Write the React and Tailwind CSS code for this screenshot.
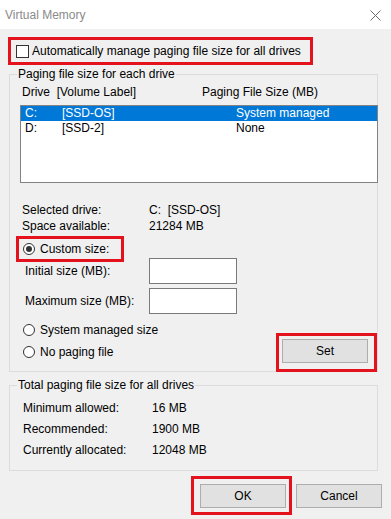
const font = { fontFamily: '"Liberation Sans", Arial, sans-serif' }

function Radio({ checked }) {
  return (
    <span className="flex h-[12px] w-[12px] shrink-0 items-center justify-center rounded-full border border-[#333] bg-white">
      {checked ? <span className="h-[6px] w-[6px] rounded-full bg-[#333]" /> : null}
    </span>
  )
}

function Button({ children }) {
  return (
    <div className="flex h-[24px] w-[86px] items-center justify-center border border-[#adadad] bg-[#e1e1e1] text-[12px] text-black">
      {children}
    </div>
  )
}

export default function App() {
  return (
    <div className="h-[519px] w-[391px] overflow-hidden bg-[#f0f0f0] text-[12px] text-black" style={font}>
      <div className="flex h-[29px] items-center justify-between bg-white pl-[5px] pr-[10px]">
        <span className="text-[#8a8a8a]">Virtual Memory</span>
        <svg width="11" height="11" viewBox="0 0 11 11" className="mt-[1px]">
          <path d="M0.5 0.5 L10.5 10.5 M10.5 0.5 L0.5 10.5" stroke="#6a6a6a" strokeWidth="1" />
        </svg>
      </div>

      <div className="ml-[8px] mt-[8px] flex h-[28px] w-[305px] items-center gap-[3px] border-[3px] border-[#e3121c] pl-[5px]">
        <span className="h-[13px] w-[13px] border border-[#333] bg-white" />
        <span>Automatically manage paging file size for all drives</span>
      </div>

      <div className="relative ml-[9px] mt-[9px] h-[298px] w-[369px] border border-[#dcdcdc]">
        <span className="absolute left-[7px] top-[-9px] bg-[#f0f0f0] px-[1px] leading-[16px]">
          Paging file size for each drive
        </span>
        <div className="flex pl-[12px] pt-[10px] leading-[15px]">
          <span className="w-[180px] whitespace-pre">Drive  [Volume Label]</span>
          <span>Paging File Size (MB)</span>
        </div>
        <div className="ml-[10px] mt-[5px] h-[78px] w-[358px] border border-[#828282] bg-white leading-[15px]">
          <div className="flex bg-[#0078d7] pl-[4px] text-white">
            <span className="w-[37px]">C:</span>
            <span className="w-[174px]">[SSD-OS]</span>
            <span>System managed</span>
          </div>
          <div className="flex pl-[4px]">
            <span className="w-[37px]">D:</span>
            <span className="w-[174px]">[SSD-2]</span>
            <span>None</span>
          </div>
        </div>
        <div className="mt-[19px] pl-[12px] leading-[16px]">
          <div className="flex">
            <span className="w-[127px]">Selected drive:</span>
            <span className="whitespace-pre">C:  [SSD-OS]</span>
          </div>
          <div className="flex">
            <span className="w-[127px]">Space available:</span>
            <span>21284 MB</span>
          </div>
        </div>
        <div className="ml-[6px] mt-[2px] flex h-[26px] w-[108px] items-center gap-[5px] border-[3px] border-[#e3121c] pl-[4px]">
          <Radio checked />
          <span>Custom size:</span>
        </div>
        <div className="mt-[-4px] flex items-center pl-[15px]">
          <span className="w-[124px]">Initial size (MB):</span>
          <span className="h-[26px] w-[88px] border border-[#7a7a7a] bg-white" />
        </div>
        <div className="mt-[4px] flex items-center pl-[15px]">
          <span className="w-[124px]">Maximum size (MB):</span>
          <span className="h-[26px] w-[88px] border border-[#7a7a7a] bg-white" />
        </div>
        <div className="mt-[8px] flex items-start justify-between">
          <div className="flex flex-col gap-[6px] pl-[13px] leading-[16px]">
            <div className="flex items-center gap-[5px]">
              <Radio />
              <span>System managed size</span>
            </div>
            <div className="flex items-center gap-[5px]">
              <Radio />
              <span>No paging file</span>
            </div>
          </div>
          <div className="relative z-10 mt-[11px] h-[39px] w-[101px] border-[3px] border-[#e3121c] pl-[3px] pt-[3px]">
            <Button>Set</Button>
          </div>
        </div>
      </div>

      <div className="relative ml-[9px] mt-[13px] h-[86px] w-[369px] border border-[#dcdcdc]">
        <span className="absolute left-[7px] top-[-9px] bg-[#f0f0f0] px-[1px] leading-[16px]">
          Total paging file size for all drives
        </span>
        <div className="pl-[13px] pt-[12px] leading-[21px]">
          <div className="flex">
            <span className="w-[129px]">Minimum allowed:</span>
            <span>16 MB</span>
          </div>
          <div className="flex">
            <span className="w-[129px]">Recommended:</span>
            <span>1900 MB</span>
          </div>
          <div className="flex">
            <span className="w-[129px]">Currently allocated:</span>
            <span>12048 MB</span>
          </div>
        </div>
      </div>

      <div className="mt-[5px] flex items-start justify-end gap-[4px] pr-[9px]">
        <div className="h-[39px] w-[101px] border-[3px] border-[#e3121c] pl-[6px] pt-[5px]">
          <Button>OK</Button>
        </div>
        <div className="mt-[8px]">
          <Button>Cancel</Button>
        </div>
      </div>
    </div>
  )
}
